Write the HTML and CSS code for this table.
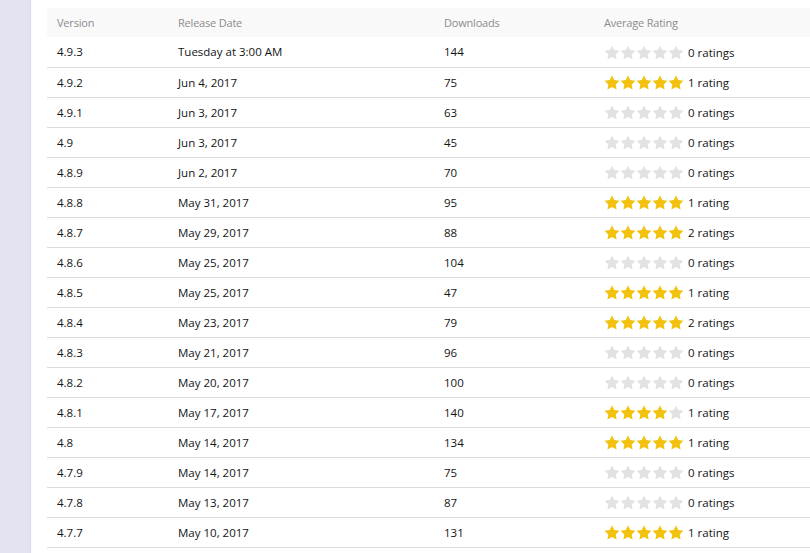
FILE: index.html
```html
<!DOCTYPE html>
<html>
<head>
<meta charset="utf-8">
<link rel="stylesheet" href="styles.css">
</head>
<body>
<div class="layout">
  <aside class="sidebar"></aside>
  <main class="content">
    <table class="history">
      <thead>
        <tr><th class="c-ver">Version</th><th class="c-date">Release Date</th><th class="c-dl">Downloads</th><th class="c-rate">Average Rating</th></tr>
      </thead>
      <tbody id="rows"></tbody>
    </table>
  </main>
</div>
<script src="app.js"></script>
</body>
</html>
```
FILE: styles.css
```css
html, body { margin: 0; padding: 0; background: #fff; }
body { font-family: "Open Sans", "Noto Sans", sans-serif; font-size: 11.5px; color: #141414; }
.layout { display: flex; height: 553px; overflow: hidden; }
.sidebar { width: 30px; flex: none; background: #e2e5f1; border-right: 1px solid #d5d9e8; }
.content { flex: 1; padding: 8px 0 0 16px; overflow: hidden; }
.history { border-collapse: collapse; width: 800px; table-layout: fixed; }
.history th { background: #f9f9f9; color: #8c8c8c; font-weight: normal; font-size: 11px; letter-spacing: -0.2px; text-align: left; height: 29px; padding: 0 10px; box-sizing: border-box; }
.history td { height: 30px; padding: 0 10px; border-bottom: 1px solid #dcdcdc; box-sizing: border-box; vertical-align: middle; white-space: nowrap; }
.c-ver { width: 121px; }
.c-date { width: 266px; }
.c-dl { width: 160px; }
.rating { display: flex; align-items: center; gap: 4px; padding-top: 1px; }
.stars { display: flex; }
.star { width: 16px; height: 15px; display: block; }
.star.on { fill: #f3c20e; }
.star.off { fill: #e2e2e2; }
.r-text { color: #141414; }
```
FILE: app.js
```js
const data = [
  ["4.9.3","Tuesday at 3:00 AM",144,0,0],
  ["4.9.2","Jun 4, 2017",75,5,1],
  ["4.9.1","Jun 3, 2017",63,0,0],
  ["4.9","Jun 3, 2017",45,0,0],
  ["4.8.9","Jun 2, 2017",70,0,0],
  ["4.8.8","May 31, 2017",95,5,1],
  ["4.8.7","May 29, 2017",88,5,2],
  ["4.8.6","May 25, 2017",104,0,0],
  ["4.8.5","May 25, 2017",47,5,1],
  ["4.8.4","May 23, 2017",79,5,2],
  ["4.8.3","May 21, 2017",96,0,0],
  ["4.8.2","May 20, 2017",100,0,0],
  ["4.8.1","May 17, 2017",140,4,1],
  ["4.8","May 14, 2017",134,5,1],
  ["4.7.9","May 14, 2017",75,0,0],
  ["4.7.8","May 13, 2017",87,0,0],
  ["4.7.7","May 10, 2017",131,5,1]
];
const starPath = '<path d="M8 0.4 L10.29 5.04 L15.42 5.79 L11.71 9.41 L12.59 14.51 L8 12.1 L3.41 14.51 L4.29 9.41 L0.58 5.79 L5.71 5.04 Z"/>';
const tbody = document.getElementById('rows');
tbody.innerHTML = data.map(([v,d,dl,s,n]) => {
  let stars = '';
  for (let i = 0; i < 5; i++) stars += `<svg class="star ${i < s ? 'on' : 'off'}" viewBox="0 0 16 15">${starPath}</svg>`;
  const label = n === 1 ? '1 rating' : `${n} ratings`;
  return `<tr><td>${v}</td><td>${d}</td><td>${dl}</td><td><div class="rating"><span class="stars">${stars}</span><span class="r-text">${label}</span></div></td></tr>`;
}).join('');
```
